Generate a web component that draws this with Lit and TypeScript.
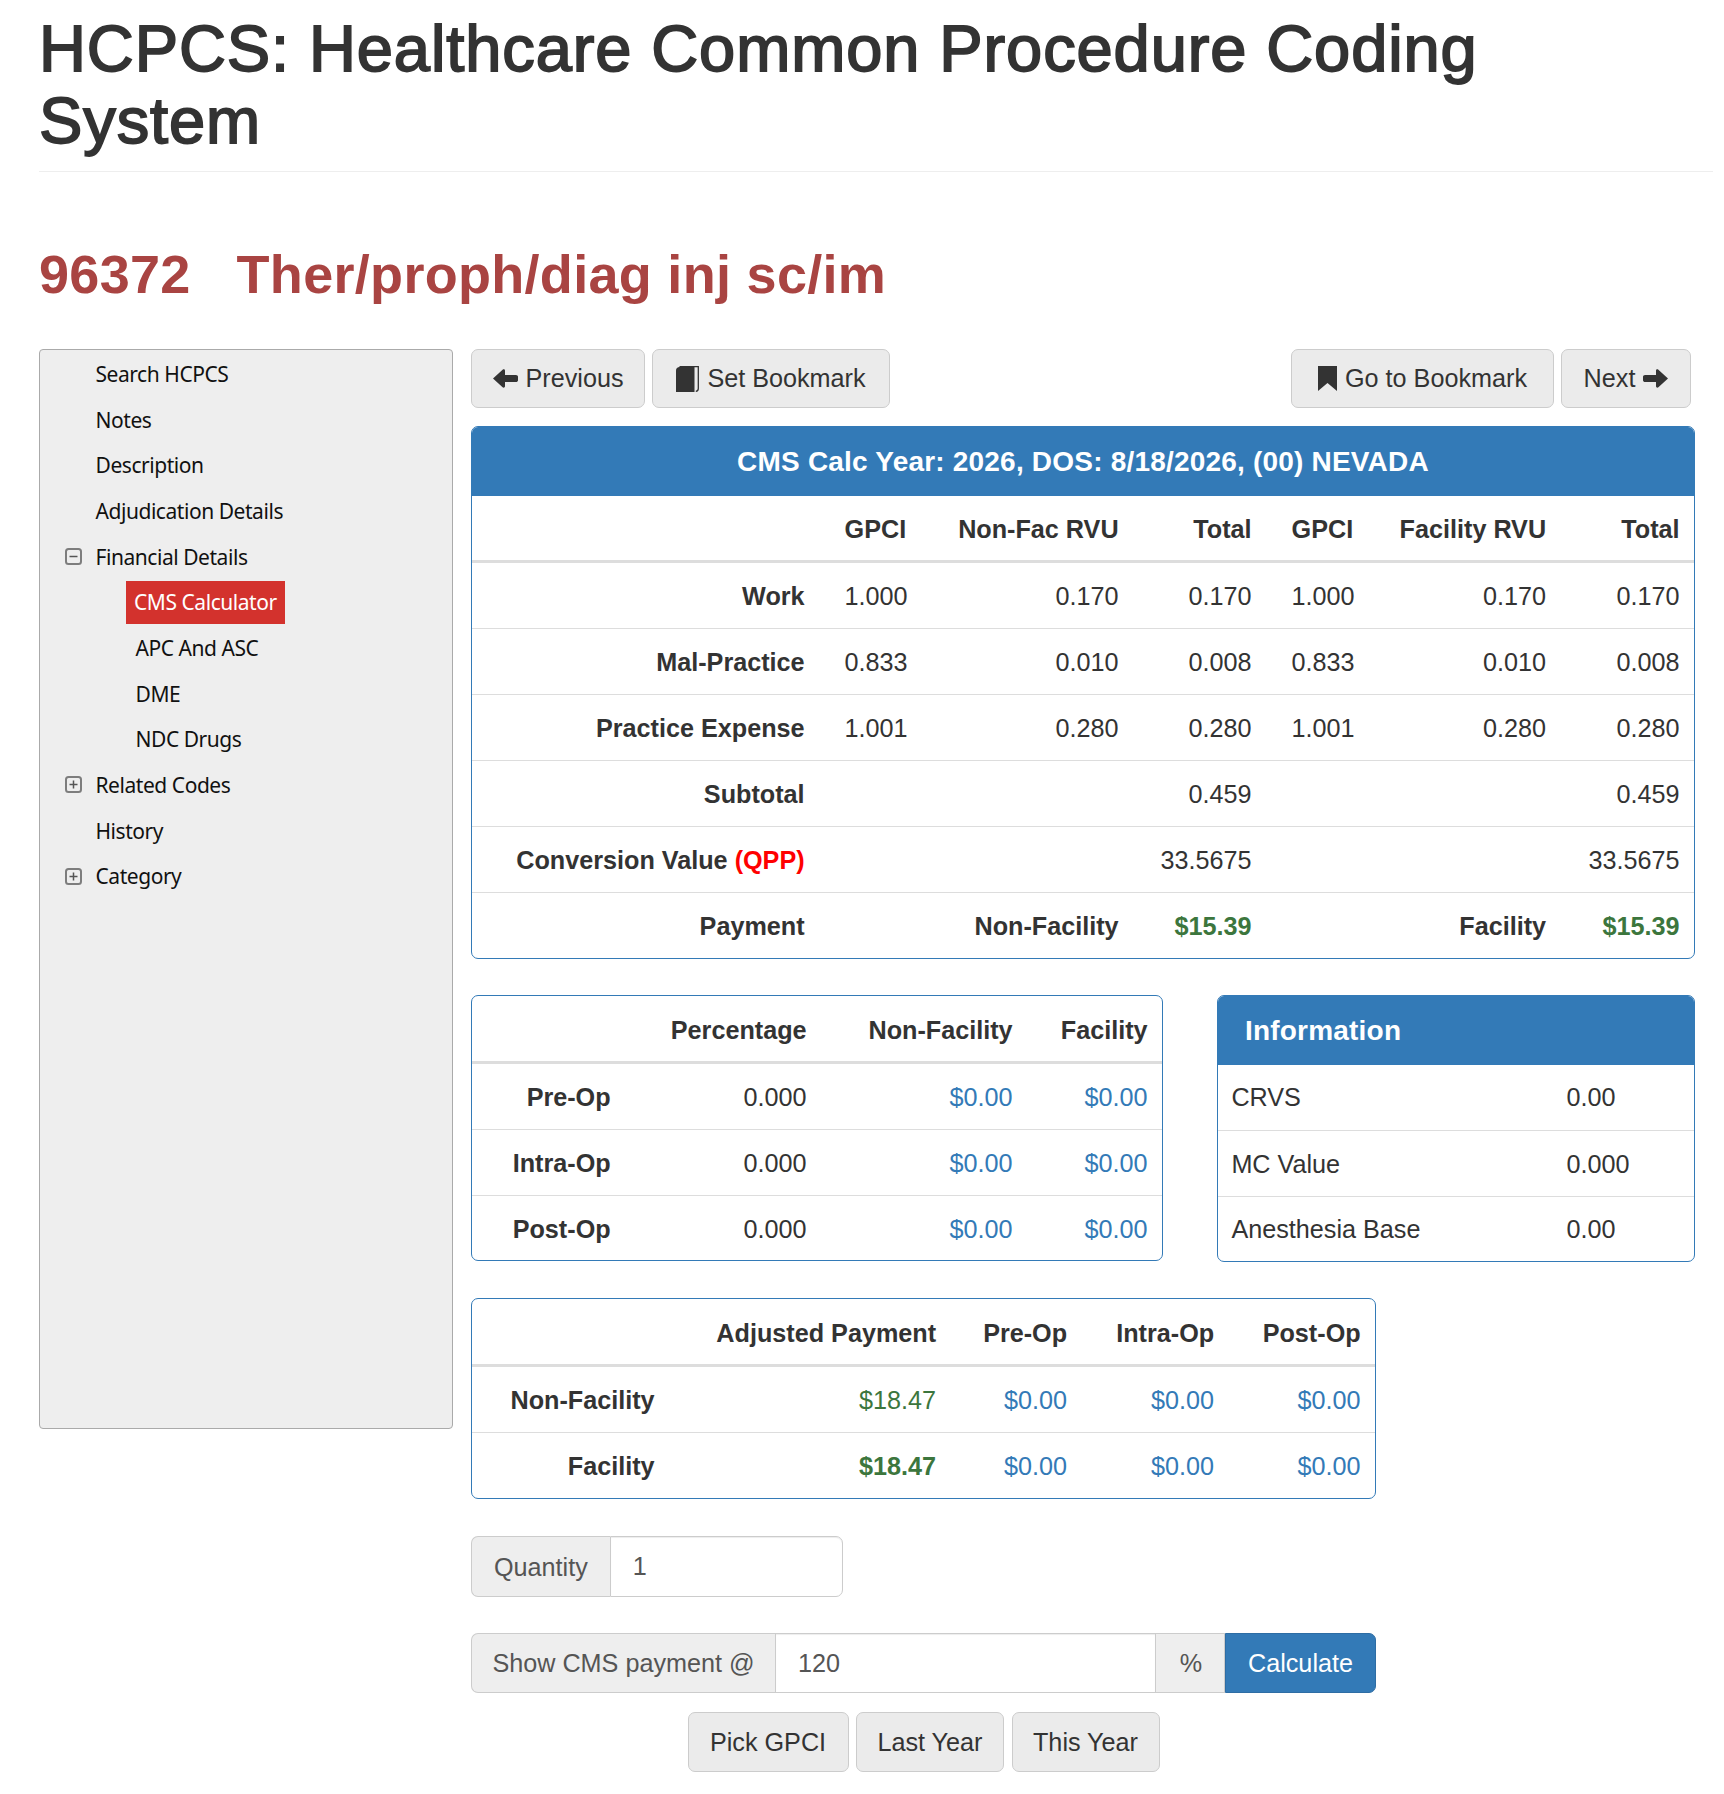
import { LitElement, html, css, nothing } from "lit";
import { customElement } from "lit/decorators.js";

const arrowLeft = html`<svg class="ic" width="25" height="19" viewBox="0 0 25 19"><path fill="currentColor" d="M0 9.500 9.600.7c.8-.7 2.400-.5 2.400 1V6h11c1 0 2 .8 2 1.800v3.400c0 1-1 1.800-2 1.800H12v4.300c0 1.500-1.600 1.700-2.400 1Z"/></svg>`;
const arrowRight = html`<svg class="ic" width="25" height="19" viewBox="0 0 25 19"><path fill="currentColor" d="M25 9.500 15.400.7c-.8-.7-2.400-.5-2.400 1V6H2C1 6 0 6.800 0 7.800v3.400c0 1 1 1.800 2 1.800h11v4.300c0 1.500 1.600 1.700 2.400 1Z"/></svg>`;
const book = html`<svg class="ic" width="23" height="26" viewBox="0 0 23 26"><path fill="currentColor" d="M0 4.500C0 2.500 1.500 1 3.500 1H18.500v25H0Z"/><path fill="none" stroke="currentColor" stroke-width="1.300" d="M3.500.7H22.300V22.500c0 1.800-1 2.700-2.500 2.800"/></svg>`;
const bookmark = html`<svg class="ic" width="19" height="25" viewBox="0 0 19 25"><path fill="currentColor" d="M0 0H19V25L9.500 17 0 25Z"/></svg>`;

const box = (open: boolean) => html`<svg class="tog" width="17" height="17" viewBox="0 0 17 17"><rect x="1" y="1" width="15" height="15" rx="2.500" fill="none" stroke="#7d7d7d" stroke-width="2"/><path d="M4.500 8.500h8${open ? "" : "M8.500 4.500v8"}" fill="none" stroke="#555" stroke-width="1.500"/></svg>`;

interface Node { t: string; sign?: "open" | "closed"; child?: boolean; active?: boolean }
const TREE: Node[] = [
  { t: "Search HCPCS" },
  { t: "Notes" },
  { t: "Description" },
  { t: "Adjudication Details" },
  { t: "Financial Details", sign: "open" },
  { t: "CMS Calculator", child: true, active: true },
  { t: "APC And ASC", child: true },
  { t: "DME", child: true },
  { t: "NDC Drugs", child: true },
  { t: "Related Codes", sign: "closed" },
  { t: "History" },
  { t: "Category", sign: "closed" },
];

@customElement("app-root")
export class AppRoot extends LitElement {
  static styles = css`
    :host { display: block; background: #fff; color: #333; font-family: "Liberation Sans", Arial, sans-serif; font-size: 25.2px; }
    * { box-sizing: border-box; }
    .page { padding: 13px 11px 22px 39px; }
    h1 { margin: 0; font-size: 65px; line-height: 71.5px; font-weight: 400; letter-spacing: .9px; -webkit-text-stroke: 1.800px #333; color: #333; padding-bottom: 15px; border-bottom: 1px solid #eee; }
    h2 { margin: 73px 0 45px; font-size: 54px; line-height: 59px; font-weight: 700; letter-spacing: .3px; color: #a94442; }
    .layout { display: flex; gap: 18px; align-items: flex-start; }
    .side { width: 414px; height: 1080px; flex: none; padding-top: 1px; background: #eee; border: 1px solid #aaa; border-radius: 4px; font-family: "Noto Sans", sans-serif; font-size: 21px; letter-spacing: -.45px; color: #111; }
    .node { height: 45.700px; display: flex; align-items: center; position: relative; padding-left: 55.500px; white-space: nowrap; }
    .node.child { padding-left: 95.500px; }
    .tog { position: absolute; left: 25px; top: 14px; }
    .active { margin-left: -9.500px; height: 43px; display: flex; align-items: center; padding: 0 8px; background: #d3322d; color: #fff; }
    .main { width: 1224px; flex: none; }
    .bar { display: flex; justify-content: space-between; margin: 0 4px 18px 0; }
    .btns { display: flex; gap: 7px; }
    .btn { height: 59px; display: inline-flex; align-items: center; justify-content: center; gap: 8px; background: #ebebeb; border: 1px solid #ccc; border-radius: 7px; color: #333; white-space: nowrap; }
    .w-prev { width: 174px; } .w-set { width: 238px; } .w-go { width: 263px; } .w-next { width: 130px; }
    .w-pick { width: 161px; } .w-yr { width: 148px; }
    .ic { flex: none; display: block; }
    .panel { border: 1px solid #337ab7; border-radius: 7px; overflow: hidden; background: #fff; }
    .heading { height: 69px; background: #337ab7; color: #fff; font-size: 28px; letter-spacing: .2px; font-weight: 700; display: flex; align-items: center; justify-content: center; }
    .heading.left { justify-content: flex-start; padding-left: 27px; }
    table { border-collapse: separate; border-spacing: 0; table-layout: fixed; width: 100%; }
    th, td { padding: 1.500px 14.400px 0; height: 66px; text-align: right; white-space: nowrap; box-sizing: border-box; border-top: 1px solid #ddd; }
    th { font-weight: 700; }
    thead th { height: 67px; padding-top: 3.500px; border-top: 0; border-bottom: 3px solid #ddd; }
    .t2 thead th, .t3 thead th { height: 68px; }
    .t2 tbody tr:last-child td, .t2 tbody tr:last-child th, .t4 tbody tr:last-child td { height: 65px; }
    .t2 tbody tr:last-child td, .t2 tbody tr:last-child th { padding-top: 3px; }
    tbody tr:first-child td, tbody tr:first-child th { border-top: 0; height: 65px; }
    .t4 tbody tr:first-child td { padding-top: 0; }
    .gp { text-align: left; padding-left: 25.600px; }
    .blue { color: #337ab7; }
    .green { color: #3c763d; }
    .red { color: #f00; }
    .t1 col:nth-child(1) { width: 347px; } .t1 col:nth-child(2) { width: 101px; } .t1 col:nth-child(3) { width: 213px; } .t1 col:nth-child(4) { width: 133px; } .t1 col:nth-child(5) { width: 101px; } .t1 col:nth-child(6) { width: 193.500px; }
    .t2 col:nth-child(1) { width: 153px; } .t2 col:nth-child(2) { width: 196px; } .t2 col:nth-child(3) { width: 206px; }
    .t3 col:nth-child(1) { width: 197px; } .t3 col:nth-child(2) { width: 281.500px; } .t3 col:nth-child(3) { width: 131px; } .t3 col:nth-child(4) { width: 147px; }
    .t4 col:nth-child(1) { width: 334px; }
    .t4 td { text-align: left; }
    .t4 td:first-child { padding-left: 13.400px; }
    .mid { display: flex; justify-content: space-between; align-items: flex-start; margin-top: 36px; }
    .p2 { width: 692px; }
    .p4 { width: 478px; }
    .p3 { width: 905px; margin-top: 36px; }
    .form { width: 905px; }
    .group { display: flex; height: 61px; margin-top: 37px; }
    .group.c { margin-top: 36px; height: 60px; }
    .addon { display: flex; align-items: center; padding: 1.500px 22px 0; background: #eee; border: 1px solid #ccc; color: #555; white-space: nowrap; }
    .addon:first-child { border-radius: 7px 0 0 7px; border-right: 0; }
    .c .addon:first-child { width: 304px; padding: 1.500px 0 0; justify-content: center; }
    .addon.pct { border-left: 0; padding: 1.500px 0 0 2px; justify-content: center; width: 69px; }
    .input { display: flex; align-items: center; padding: 0 22px; border: 1px solid #ccc; background: #fff; color: #555; box-shadow: inset 0 1px 1px rgba(0,0,0,.075); }
    .q { width: 372px; }
    .q .input { flex: 1; }
    .q .input:last-child { border-radius: 0 7px 7px 0; }
    .c .input { flex: 1; }
    .calc { width: 151px; display: flex; align-items: center; justify-content: center; background: #337ab7; border: 1px solid #2e6da4; border-radius: 0 7px 7px 0; color: #fff; }
    .lower { display: flex; justify-content: center; gap: 7.500px; margin-top: 19px; }
    .lower .btn { height: 60px; padding-top: 1.500px; }
  `;

  private table1() {
    const rows: [string, string, string, string, string, string, string][] = [
      ["Work", "1.000", "0.170", "0.170", "1.000", "0.170", "0.170"],
      ["Mal-Practice", "0.833", "0.010", "0.008", "0.833", "0.010", "0.008"],
      ["Practice Expense", "1.001", "0.280", "0.280", "1.001", "0.280", "0.280"],
      ["Subtotal", "", "", "0.459", "", "", "0.459"],
    ];
    return html`<table class="t1">
      <colgroup><col /><col /><col /><col /><col /><col /><col /></colgroup>
      <thead><tr><th></th><th class="gp">GPCI</th><th>Non-Fac RVU</th><th>Total</th><th class="gp">GPCI</th><th>Facility RVU</th><th>Total</th></tr></thead>
      <tbody>
        ${rows.map(
          (r) => html`<tr><th>${r[0]}</th><td class="gp">${r[1]}</td><td>${r[2]}</td><td>${r[3]}</td><td class="gp">${r[4]}</td><td>${r[5]}</td><td>${r[6]}</td></tr>`
        )}
        <tr><th>Conversion Value <span class="red">(QPP)</span></th><td></td><td></td><td>33.5675</td><td></td><td></td><td>33.5675</td></tr>
        <tr><th>Payment</th><td></td><th>Non-Facility</th><th class="green">$15.39</th><td></td><th>Facility</th><th class="green">$15.39</th></tr>
      </tbody>
    </table>`;
  }

  private table2() {
    return html`<table class="t2">
      <colgroup><col /><col /><col /><col /></colgroup>
      <thead><tr><th></th><th>Percentage</th><th>Non-Facility</th><th>Facility</th></tr></thead>
      <tbody>
        ${["Pre-Op", "Intra-Op", "Post-Op"].map(
          (l) => html`<tr><th>${l}</th><td>0.000</td><td class="blue">$0.00</td><td class="blue">$0.00</td></tr>`
        )}
      </tbody>
    </table>`;
  }

  private table3() {
    return html`<table class="t3">
      <colgroup><col /><col /><col /><col /><col /></colgroup>
      <thead><tr><th></th><th>Adjusted Payment</th><th>Pre-Op</th><th>Intra-Op</th><th>Post-Op</th></tr></thead>
      <tbody>
        <tr><th>Non-Facility</th><td class="green">$18.47</td><td class="blue">$0.00</td><td class="blue">$0.00</td><td class="blue">$0.00</td></tr>
        <tr><th>Facility</th><th class="green">$18.47</th><td class="blue">$0.00</td><td class="blue">$0.00</td><td class="blue">$0.00</td></tr>
      </tbody>
    </table>`;
  }

  private node(n: Node) {
    return html`<div class="node ${n.child ? "child" : ""}">
      ${n.sign ? box(n.sign === "open") : nothing}
      ${n.active ? html`<span class="active">${n.t}</span>` : html`<span>${n.t}</span>`}
    </div>`;
  }

  render() {
    return html`<div class="page">
      <h1>HCPCS: Healthcare Common Procedure Coding<br />System</h1>
      <h2>96372&nbsp;&nbsp;&nbsp;Ther/proph/diag inj sc/im</h2>
      <div class="layout">
        <nav class="side">${TREE.map((n) => this.node(n))}</nav>
        <div class="main">
          <div class="bar">
            <div class="btns">
              <span class="btn w-prev">${arrowLeft}Previous</span>
              <span class="btn w-set">${book}Set Bookmark</span>
            </div>
            <div class="btns">
              <span class="btn w-go">${bookmark}Go to Bookmark</span>
              <span class="btn w-next">Next${arrowRight}</span>
            </div>
          </div>
          <section class="panel">
            <div class="heading">CMS Calc Year: 2026, DOS: 8/18/2026, (00) NEVADA</div>
            ${this.table1()}
          </section>
          <div class="mid">
            <section class="panel p2">${this.table2()}</section>
            <section class="panel p4">
              <div class="heading left">Information</div>
              <table class="t4">
                <colgroup><col /><col /></colgroup>
                <tbody>
                  <tr><td>CRVS</td><td>0.00</td></tr>
                  <tr><td>MC Value</td><td>0.000</td></tr>
                  <tr><td>Anesthesia Base</td><td>0.00</td></tr>
                </tbody>
              </table>
            </section>
          </div>
          <section class="panel p3">${this.table3()}</section>
          <div class="form">
            <div class="group q"><span class="addon">Quantity</span><span class="input">1</span></div>
            <div class="group c"><span class="addon">Show CMS payment @</span><span class="input">120</span><span class="addon pct">%</span><span class="calc">Calculate</span></div>
            <div class="lower">
              <span class="btn w-pick">Pick GPCI</span><span class="btn w-yr">Last Year</span><span class="btn w-yr">This Year</span>
            </div>
          </div>
        </div>
      </div>
    </div>`;
  }
}
